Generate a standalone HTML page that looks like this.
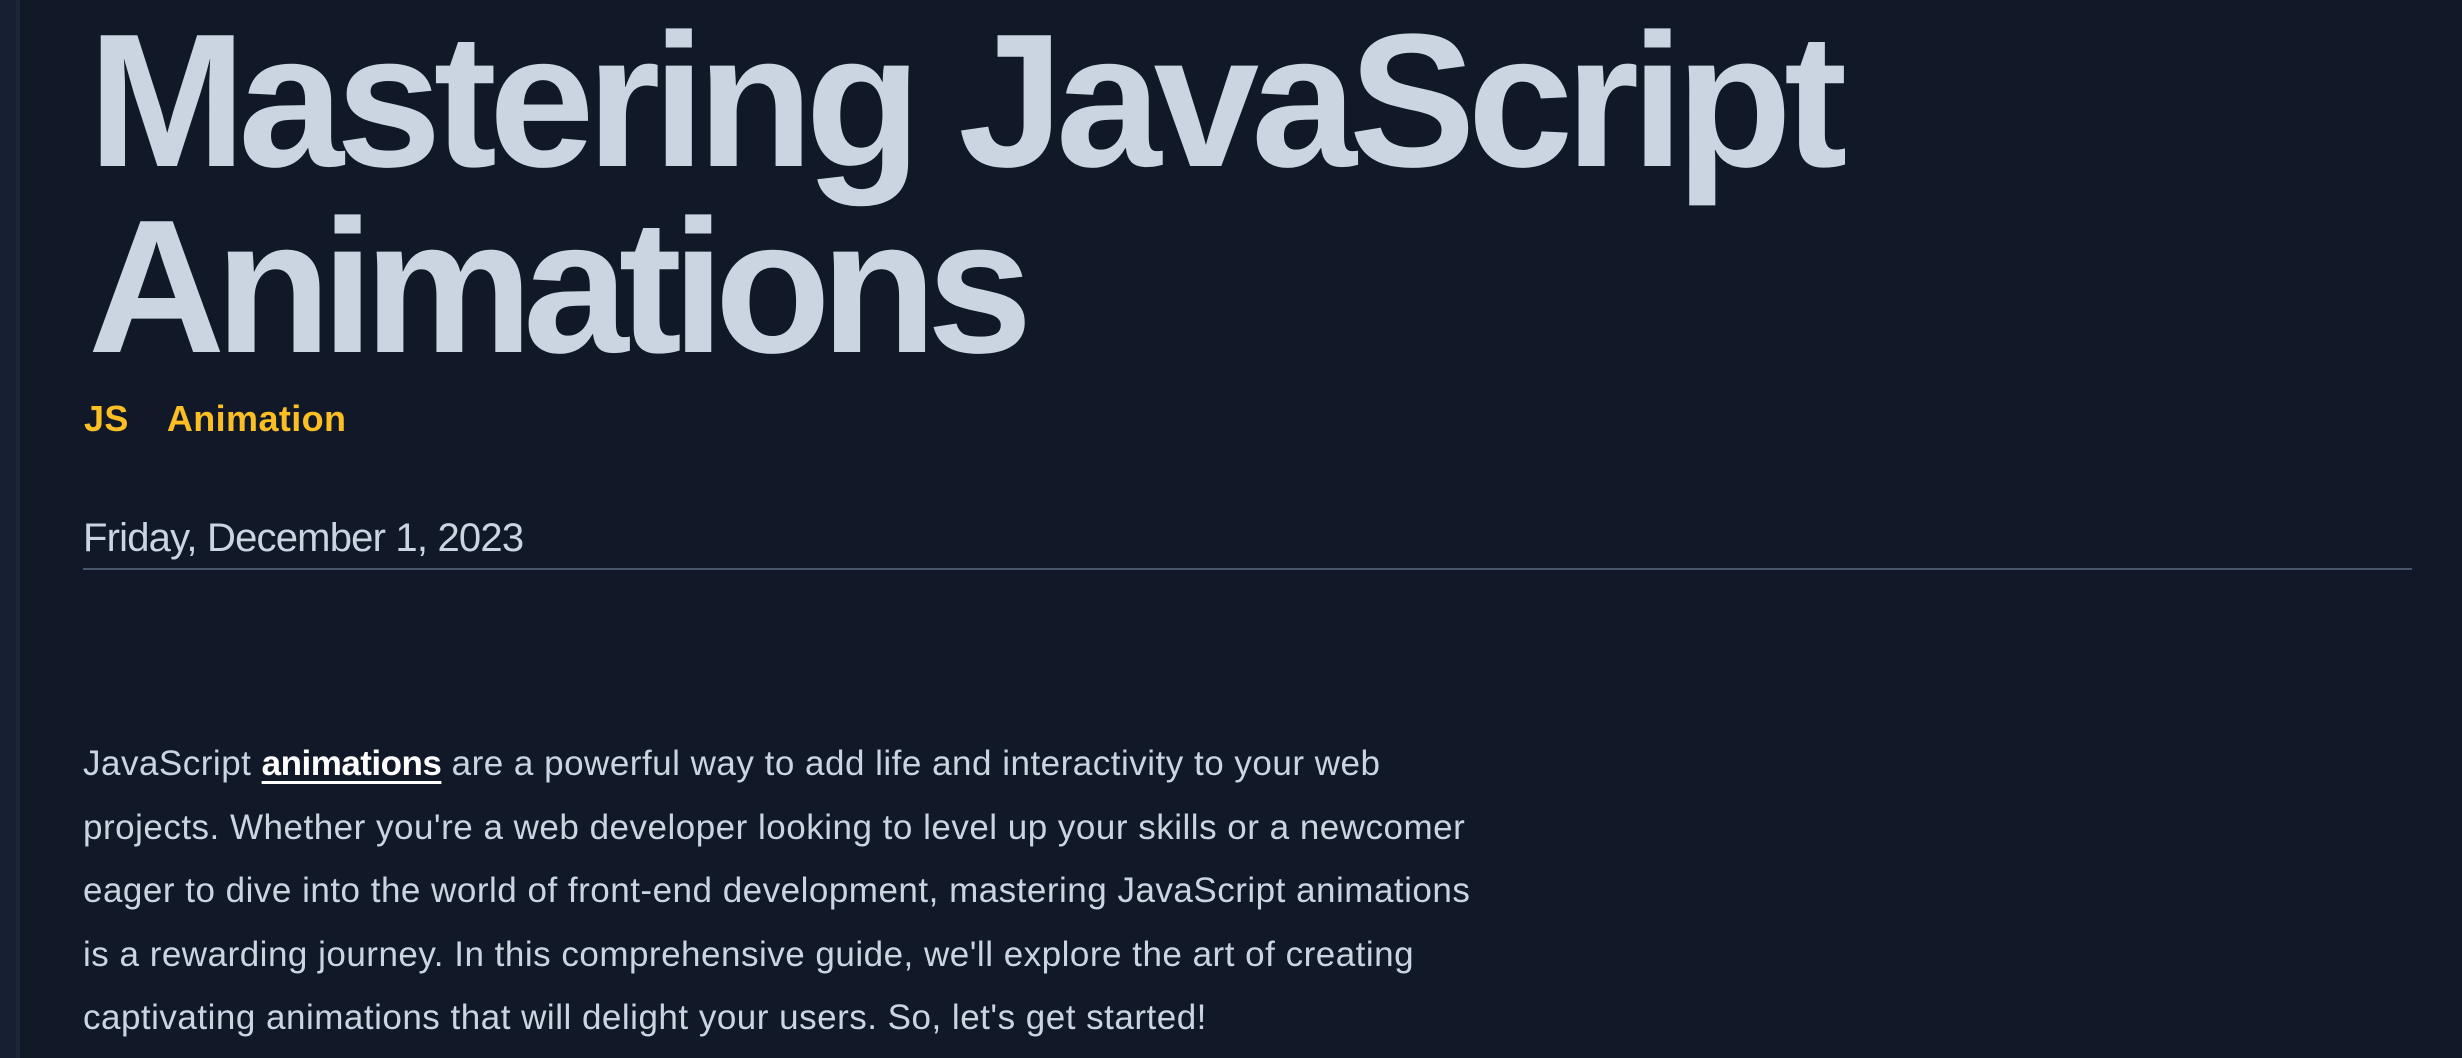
<!DOCTYPE html>
<html><head><meta charset="utf-8"><style>
html,body{margin:0;padding:0;}
body{width:2462px;height:1058px;background:#111827;overflow:hidden;position:relative;font-family:"Liberation Sans",sans-serif;}
.strip{position:absolute;left:0;top:0;width:16px;height:1058px;background:#172033;}
.line{position:absolute;left:16px;top:0;width:4px;height:1058px;background:#1c2638;}
h1{position:absolute;left:88px;top:0;margin:0;font-size:190px;line-height:189px;font-weight:bold;color:#cbd5e1;letter-spacing:-8px;white-space:nowrap;}
.tags{position:absolute;left:84px;top:398px;font-size:36px;font-weight:bold;color:#fbbf24;letter-spacing:0.4px;white-space:nowrap;}
.date{position:absolute;left:83px;top:516px;font-size:40px;color:#cbd5e1;letter-spacing:-0.8px;white-space:nowrap;}
.hr{position:absolute;left:83px;top:568px;width:2329px;height:2px;background:#475569;}
.p{position:absolute;left:83px;top:732px;font-size:35px;line-height:63.6px;color:#cbd5e1;letter-spacing:0.5px;white-space:nowrap;}
.p a{color:#fff;font-weight:bold;letter-spacing:-0.5px;text-decoration:underline;text-underline-offset:6px;text-decoration-thickness:3px;}
</style></head><body>
<div class="strip"></div><div class="line"></div>
<h1><div style="position:absolute;top:7px;left:0">Mastering JavaScript</div><div style="position:absolute;top:193px;left:0;letter-spacing:-10px">Animations</div></h1>
<div class="tags">JS<span style="display:inline-block;width:38px"></span>Animation</div>
<div class="date">Friday, December 1, 2023</div>
<div class="hr"></div>
<div class="p">JavaScript <a>animations</a> are a powerful way to add life and interactivity to your web<br>projects. Whether you're a web developer looking to level up your skills or a newcomer<br>eager to dive into the world of front-end development, mastering JavaScript animations<br>is a rewarding journey. In this comprehensive guide, we'll explore the art of creating<br>captivating animations that will delight your users. So, let's get started!</div>
</body></html>
